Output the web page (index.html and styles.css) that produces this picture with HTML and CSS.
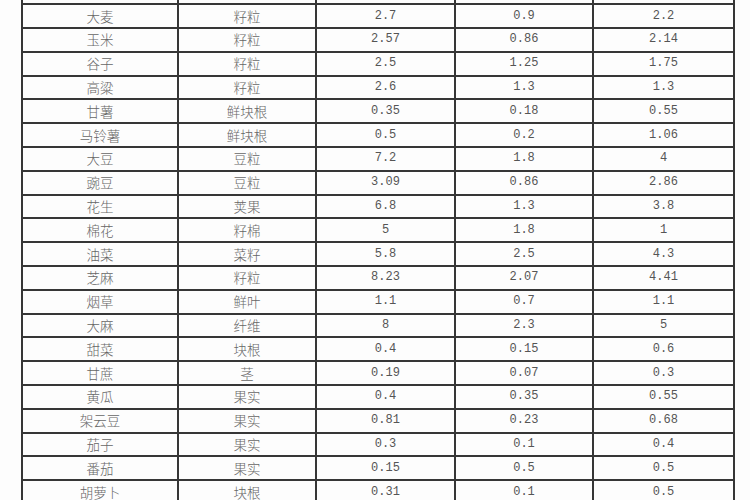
FILE: index.html
```html
<!DOCTYPE html>
<html lang="zh">
<head>
<meta charset="utf-8">
<title>作物养分吸收表</title>
<link rel="stylesheet" href="styles.css">
</head>
<body>
<div class="page">
<table class="grid">
<colgroup>
<col class="c1"><col class="c2"><col class="c3"><col class="c4"><col class="c5">
</colgroup>
<thead>
<tr class="head"><th></th><th></th><th></th><th></th><th></th></tr>
</thead>
<tbody>
<tr><td class="zh">大麦</td><td class="zh">籽粒</td><td>2.7</td><td>0.9</td><td>2.2</td></tr>
<tr><td class="zh">玉米</td><td class="zh">籽粒</td><td>2.57</td><td>0.86</td><td>2.14</td></tr>
<tr><td class="zh">谷子</td><td class="zh">籽粒</td><td>2.5</td><td>1.25</td><td>1.75</td></tr>
<tr><td class="zh">高粱</td><td class="zh">籽粒</td><td>2.6</td><td>1.3</td><td>1.3</td></tr>
<tr><td class="zh">甘薯</td><td class="zh">鲜块根</td><td>0.35</td><td>0.18</td><td>0.55</td></tr>
<tr><td class="zh">马铃薯</td><td class="zh">鲜块根</td><td>0.5</td><td>0.2</td><td>1.06</td></tr>
<tr><td class="zh">大豆</td><td class="zh">豆粒</td><td>7.2</td><td>1.8</td><td>4</td></tr>
<tr><td class="zh">豌豆</td><td class="zh">豆粒</td><td>3.09</td><td>0.86</td><td>2.86</td></tr>
<tr><td class="zh">花生</td><td class="zh">荚果</td><td>6.8</td><td>1.3</td><td>3.8</td></tr>
<tr><td class="zh">棉花</td><td class="zh">籽棉</td><td>5</td><td>1.8</td><td>1</td></tr>
<tr><td class="zh">油菜</td><td class="zh">菜籽</td><td>5.8</td><td>2.5</td><td>4.3</td></tr>
<tr><td class="zh">芝麻</td><td class="zh">籽粒</td><td>8.23</td><td>2.07</td><td>4.41</td></tr>
<tr><td class="zh">烟草</td><td class="zh">鲜叶</td><td>1.1</td><td>0.7</td><td>1.1</td></tr>
<tr><td class="zh">大麻</td><td class="zh">纤维</td><td>8</td><td>2.3</td><td>5</td></tr>
<tr><td class="zh">甜菜</td><td class="zh">块根</td><td>0.4</td><td>0.15</td><td>0.6</td></tr>
<tr><td class="zh">甘蔗</td><td class="zh">茎</td><td>0.19</td><td>0.07</td><td>0.3</td></tr>
<tr><td class="zh">黄瓜</td><td class="zh">果实</td><td>0.4</td><td>0.35</td><td>0.55</td></tr>
<tr><td class="zh">架云豆</td><td class="zh">果实</td><td>0.81</td><td>0.23</td><td>0.68</td></tr>
<tr><td class="zh">茄子</td><td class="zh">果实</td><td>0.3</td><td>0.1</td><td>0.4</td></tr>
<tr><td class="zh">番茄</td><td class="zh">果实</td><td>0.15</td><td>0.5</td><td>0.5</td></tr>
<tr><td class="zh">胡萝卜</td><td class="zh">块根</td><td>0.31</td><td>0.1</td><td>0.5</td></tr>
</tbody>
</table>
</div>
</body>
</html>
```

FILE: styles.css
```css
html, body {
  margin: 0;
  padding: 0;
  background: #ffffff;
  overflow: hidden;
}

.page {
  width: 750px;
  height: 500px;
  overflow: hidden;
  background: #fdfdfd;
}

.grid {
  border-collapse: collapse;
  table-layout: fixed;
  width: 712px;
  margin-left: 21px;
  margin-top: -20.5px;
}

.c1 { width: 156px; }
.c2 { width: 138px; }
.c3 { width: 139px; }
.c4 { width: 138px; }
.c5 { width: 141px; }

.grid th,
.grid td {
  border: 2px solid #363636;
  height: 21.8px;
  padding: 0;
  text-align: center;
  vertical-align: middle;
  font-family: "Liberation Mono", "DejaVu Sans Mono", monospace;
  font-size: 12px;
  line-height: 19px;
  color: #555555;
  font-weight: normal;
  overflow: hidden;
  white-space: nowrap;
}

.grid td.zh {
  font-family: "Noto Sans CJK SC", "Noto Sans", sans-serif;
  font-size: 13.5px;
  font-weight: 300;
  color: #666666;
}
```
